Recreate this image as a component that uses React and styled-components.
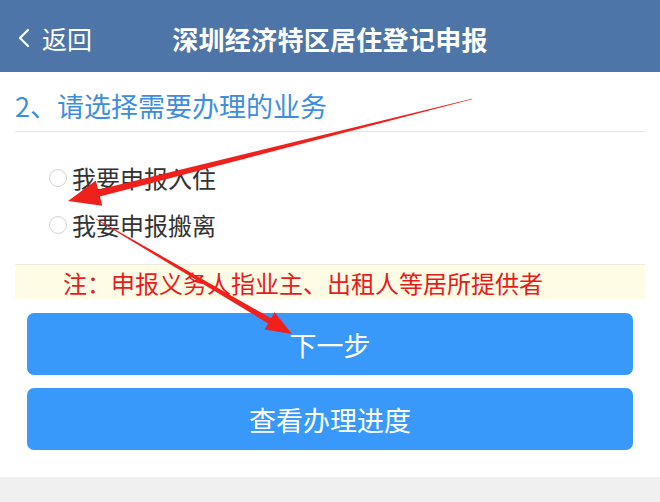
import React from 'react';
import styled, { createGlobalStyle } from 'styled-components';

const GlobalStyle = createGlobalStyle`
  html, body {
    margin: 0;
    padding: 0;
    background: #f0f0f0;
    font-family: "Noto Sans CJK SC", "Noto Sans", "Liberation Sans", sans-serif;
  }
`;

const options = ['我要申报入住', '我要申报搬离'];

// tapered annotation arrow: thin tail, widening shaft, pointed head
const arrowPoints = ({ tail, tip, tailW, shaftW, headLen, headW }) => {
  const dx = tip[0] - tail[0];
  const dy = tip[1] - tail[1];
  const len = Math.hypot(dx, dy);
  const ux = dx / len;
  const uy = dy / len;
  const nx = -uy;
  const ny = ux;
  const bx = tip[0] - ux * headLen;
  const by = tip[1] - uy * headLen;
  const p = (x, y, w) => [x + nx * w, y + ny * w];
  const pts = [
    p(tail[0], tail[1], tailW / 2),
    p(bx, by, shaftW / 2),
    p(bx, by, headW / 2),
    tip,
    p(bx, by, -headW / 2),
    p(bx, by, -shaftW / 2),
    p(tail[0], tail[1], -tailW / 2),
  ];
  return pts.map(([x, y]) => `${x.toFixed(1)},${y.toFixed(1)}`).join(' ');
};

const arrows = [
  { tail: [472, 99], tip: [68, 201], tailW: 0.6, shaftW: 7, headLen: 32, headW: 26 },
  { tail: [96, 219], tip: [292, 334], tailW: 0.6, shaftW: 6, headLen: 26, headW: 20 },
];

const App = () => {
  return (
    <>
      <GlobalStyle />
      <Page>
        <Header>
          <Back>
            <svg width="16" height="24" viewBox="0 0 16 24">
              <path d="M12 4 L4 12 L12 20" fill="none" stroke="#fff" strokeWidth="2.2" strokeLinecap="round" strokeLinejoin="round" />
            </svg>
            <span>返回</span>
          </Back>
          <Title>深圳经济特区居住登记申报</Title>
        </Header>
        <Content>
          <SectionTitle>2、请选择需要办理的业务</SectionTitle>
          <OptionList>
            {options.map((label) => (
              <Option key={label}>
                <Radio />
                {label}
              </Option>
            ))}
          </OptionList>
          <Note>注：申报义务人指业主、出租人等居所提供者</Note>
          <Buttons>
            <Button>下一步</Button>
            <Button>查看办理进度</Button>
          </Buttons>
        </Content>
        <Annotations width="660" height="502" viewBox="0 0 660 502">
          {arrows.map((a, i) => (
            <polygon key={i} points={arrowPoints(a)} fill="#f0201c" />
          ))}
        </Annotations>
      </Page>
    </>
  );
};

const Page = styled.div`
  position: relative;
  width: 660px;
  height: 502px;
  overflow: hidden;
`;

const Header = styled.header`
  position: relative;
  height: 72px;
  background: #4e75a8;
  display: flex;
  align-items: center;
  justify-content: center;
  color: #fff;
`;

const Back = styled.div`
  position: absolute;
  left: 16px;
  top: 0;
  bottom: 0;
  display: flex;
  align-items: center;
  gap: 10px;
  font-size: 25px;
  padding-top: 4px;
`;

const Title = styled.h1`
  margin: 4px 0 0;
  font-size: 26px;
  font-weight: 700;
  letter-spacing: 0.3px;
`;

const Content = styled.main`
  background: #fff;
  padding: 0 15px 27px;
`;

const SectionTitle = styled.h2`
  margin: 0;
  height: 60px;
  display: flex;
  align-items: center;
  padding-top: 7px;
  box-sizing: border-box;
  font-size: 27px;
  font-weight: 400;
  color: #3d8ee0;
  border-bottom: 1px solid #e6e6e6;
`;

const OptionList = styled.div`
  padding: 22px 0 0 34px;
`;

const Option = styled.label`
  height: 47px;
  display: flex;
  align-items: center;
  gap: 5px;
  font-size: 24px;
  color: #333;
`;

const Radio = styled.span`
  width: 18px;
  height: 18px;
  border-radius: 50%;
  border: 1px solid #d6d6d6;
  box-sizing: border-box;
  background: #fff;
  box-shadow: inset 0 1px 1px rgba(0, 0, 0, 0.04);
`;

const Note = styled.div`
  margin-top: 16px;
  height: 35px;
  box-sizing: border-box;
  border-top: 1px solid #ebebe0;
  background: #fffce6;
  color: #e81b1b;
  font-size: 24px;
  display: flex;
  align-items: center;
  padding-left: 48px;
`;

const Buttons = styled.div`
  margin: 14px 12px 0;
  display: flex;
  flex-direction: column;
  gap: 13px;
`;

const Button = styled.button`
  height: 62px;
  border: none;
  border-radius: 7px;
  background: #3899fb;
  color: #fff;
  font-family: inherit;
  font-size: 27px;
  padding: 0;
`;

const Annotations = styled.svg`
  position: absolute;
  left: 0;
  top: 0;
  pointer-events: none;
`;

export default App;
